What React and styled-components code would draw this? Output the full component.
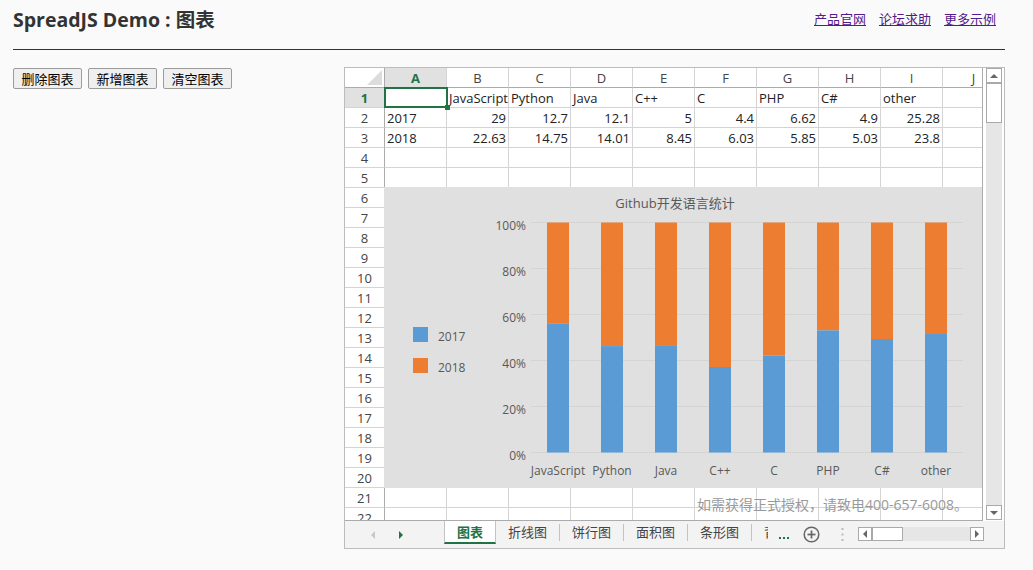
import React from 'react';
import styled, { createGlobalStyle } from 'styled-components';

const FONT = `"Open Sans", "Noto Sans CJK SC", sans-serif`;
const CJK = `"Noto Sans CJK SC", "Open Sans", sans-serif`;
const GREEN = '#217346';

const GlobalStyle = createGlobalStyle`
  html, body { margin: 0; padding: 0; background: #fafafa; }
  body { font-family: ${FONT}; color: #333; }
  * { box-sizing: border-box; }
`;

const Page = styled.div`
  width: 1033px;
  padding-left: 13px;
`;

const Header = styled.header`
  display: flex;
  justify-content: space-between;
  align-items: center;
  width: 992px;
  height: 40px;
`;

const Title = styled.h1`
  margin: 0;
  font-size: 19.5px;
  font-weight: 700;
  line-height: 24px;
  color: #333;
`;

const Links = styled.nav`
  display: flex;
  gap: 13px;
  padding-right: 9px;
  margin-top: -2px;
`;

const Link = styled.a`
  font-family: ${CJK};
  font-size: 13px;
  line-height: 18px;
  color: #551a8b;
  text-decoration: underline;
`;

const Rule = styled.hr`
  margin: 9px 0 0;
  width: 992px;
  height: 0;
  border: 0;
  border-top: 1px solid #333;
`;

const Content = styled.main`
  display: grid;
  grid-template-columns: 331px 661px;
  margin-top: 17px;
`;

const ButtonRow = styled.div`
  display: flex;
  gap: 6px;
  align-self: start;
  margin-top: 1px;
`;

const Button = styled.button`
  width: 69px;
  height: 21px;
  padding: 0;
  font-family: ${CJK};
  font-size: 13px;
  line-height: 19px;
  color: #000;
  background: #efefef;
  border: 1px solid #9c9c9c;
  border-radius: 2px;
`;

const Sheet = styled.section`
  width: 661px;
  height: 482px;
  border: 1px solid #bcbcbc;
  background: #fff;
  display: flex;
  flex-direction: column;
`;

const SheetTop = styled.div`
  display: flex;
  height: 453px;
`;

const Viewport = styled.div`
  position: relative;
  width: 638px;
  height: 453px;
  overflow: hidden;
  border-right: 1px solid #ababab;
  border-bottom: 1px solid #ababab;
`;

const Grid = styled.div`
  display: grid;
  grid-template-columns: 40px repeat(10, 62px);
  grid-auto-rows: 20px;
  width: max-content;
  font-size: 13px;
  line-height: 19px;
`;

const Corner = styled.div`
  position: relative;
  background: #fff;
  border-right: 1px solid #ababab;
  border-bottom: 1px solid #ababab;
  &::after {
    content: '';
    position: absolute;
    right: 2px;
    bottom: 2px;
    border-left: 15px solid transparent;
    border-bottom: 15px solid #dcdcdc;
  }
`;

const ColHead = styled.div`
  padding-top: 1px;
  text-align: center;
  color: ${(p) => (p.$active ? GREEN : '#444')};
  font-weight: ${(p) => (p.$active ? 700 : 400)};
  background: ${(p) => (p.$active ? '#e1e1e1' : '#fff')};
  border-right: 1px solid #d4d4d4;
  border-bottom: 1px solid #ababab;
`;

const RowHead = styled.div`
  padding-top: 1px;
  text-align: center;
  color: ${(p) => (p.$active ? GREEN : '#444')};
  font-weight: ${(p) => (p.$active ? 700 : 400)};
  background: ${(p) => (p.$active ? '#e1e1e1' : '#fff')};
  border-right: 1px solid #ababab;
  border-bottom: 1px solid #d4d4d4;
`;

const Cell = styled.div`
  padding: 1px 2px 0;
  text-align: ${(p) => p.$align || 'left'};
  white-space: nowrap;
  overflow: hidden;
  color: #222;
  border-right: 1px solid #d4d4d4;
  border-bottom: 1px solid #d4d4d4;
`;

const Selection = styled.div`
  position: absolute;
  left: 39px;
  top: 19px;
  width: 64px;
  height: 21px;
  border: 2px solid ${GREEN};
`;

const Handle = styled.div`
  position: absolute;
  left: 100px;
  top: 37px;
  width: 5px;
  height: 5px;
  background: ${GREEN};
`;

const ChartBox = styled.div`
  position: absolute;
  left: 39px;
  top: 119px;
  width: 620px;
  height: 301px;
  background: #e0e0e0;
  font-family: ${FONT};
`;

const Watermark = styled.div`
  position: absolute;
  left: 352px;
  top: 427px;
  font-size: 14px;
  line-height: 20px;
  color: #999;
  white-space: nowrap;
`;

const VScroll = styled.div`
  width: 21px;
  padding: 0 2px 0 3px;
  display: flex;
  flex-direction: column;
  background: #fff;
  height: 452px;
`;

const ScrollBtn = styled.div`
  flex: none;
  height: ${(p) => p.$h || 15}px;
  width: ${(p) => p.$w || 'auto'};
  display: flex;
  align-items: center;
  justify-content: center;
  background: #fff;
  border: 1px solid #a9a9a9;
`;

const Thumb = styled.div`
  flex: none;
  height: ${(p) => p.$size}px;
  background: #fff;
  border: 1px solid #a9a9a9;
`;

const HThumb = styled.div`
  flex: none;
  width: ${(p) => p.$size}px;
  height: 14px;
  background: #fff;
  border: 1px solid #a9a9a9;
`;

const Track = styled.div`
  flex: 1;
  background: #e6e6e6;
`;

const Arrow = styled.span`
  width: 0;
  height: 0;
  ${(p) =>
    p.$dir === 'up'
      ? `border-left: 4px solid transparent; border-right: 4px solid transparent; border-bottom: 4px solid ${p.$color};`
      : p.$dir === 'down'
      ? `border-left: 4px solid transparent; border-right: 4px solid transparent; border-top: 4px solid ${p.$color};`
      : p.$dir === 'left'
      ? `border-top: 4px solid transparent; border-bottom: 4px solid transparent; border-right: 4px solid ${p.$color};`
      : `border-top: 4px solid transparent; border-bottom: 4px solid transparent; border-left: 4px solid ${p.$color};`}
`;

const TabBar = styled.div`
  display: flex;
  align-items: flex-start;
  height: 27px;
  background: #f3f3f3;
`;

const Nav = styled.div`
  display: flex;
  align-items: center;
  gap: 24px;
  width: 99px;
  height: 27px;
  padding-left: 26px;
`;

const Tabs = styled.div`
  display: flex;
  width: 324px;
  overflow: hidden;
  flex: none;
`;

const Tab = styled.div`
  position: relative;
  flex: none;
  height: 23px;
  padding: 0 12px;
  font-family: ${CJK};
  font-size: 13px;
  line-height: 21px;
  white-space: nowrap;
  color: ${(p) => (p.$active ? GREEN : '#444')};
  font-weight: ${(p) => (p.$active ? 700 : 400)};
  background: ${(p) => (p.$active ? '#fff' : 'transparent')};
  border-left: ${(p) => (p.$active ? '1px solid #c3c3c3' : '0')};
  border-right: ${(p) => (p.$active ? '1px solid #c3c3c3' : '1px solid transparent')};
  border-bottom: 2px solid ${(p) => (p.$active ? GREEN : 'transparent')};
  ${(p) =>
    !p.$active &&
    `&::after { content: ''; position: absolute; right: -1px; top: 3px; height: 17px; border-right: 1px solid #c3c3c3; }`}
`;

const More = styled.div`
  display: flex;
  gap: 2px;
  margin: 16px 0 0 11px;
  span {
    width: 2px;
    height: 2px;
    background: ${GREEN};
  }
`;

const IconSlot = styled.div`
  display: flex;
  align-items: center;
  height: 27px;
  margin-left: ${(p) => p.$ml}px;
`;

const HScroll = styled.div`
  display: flex;
  width: 126px;
  height: 14px;
  margin: 6px 0 0 14px;
`;

const cols = ['A', 'B', 'C', 'D', 'E', 'F', 'G', 'H', 'I', 'J'];
const data = [
  ['', 'JavaScript', 'Python', 'Java', 'C++', 'C', 'PHP', 'C#', 'other', ''],
  ['2017', 29, 12.7, 12.1, 5, 4.4, 6.62, 4.9, 25.28, ''],
  ['2018', 22.63, 14.75, 14.01, 8.45, 6.03, 5.85, 5.03, 23.8, ''],
];

const cats = ['JavaScript', 'Python', 'Java', 'C++', 'C', 'PHP', 'C#', 'other'];
const v17 = [29, 12.7, 12.1, 5, 4.4, 6.62, 4.9, 25.28];
const v18 = [22.63, 14.75, 14.01, 8.45, 6.03, 5.85, 5.03, 23.8];

function Chart() {
  const top = 35.5;
  const step = 46;
  const bottom = top + step * 5;
  const H = bottom - top;
  const left = 147;
  const cw = 54;
  const blue = '#5b9bd5';
  const orange = '#ed7d31';
  const grey = '#595959';
  return (
    <svg width="620" height="301" viewBox="0 0 620 301">
      <text x="291" y="20.5" textAnchor="middle" fontSize="13" fill={grey}>
        Github开发语言统计
      </text>
      {[0, 1, 2, 3, 4, 5].map((i) => (
        <g key={i}>
          <line x1={left} x2={left + cw * 8} y1={top + i * step} y2={top + i * step} stroke="#d4d4d4" strokeWidth="1" />
          <text x="142" y={top + i * step + 7} textAnchor="end" fontSize="12" fill={grey}>
            {`${100 - i * 20}%`}
          </text>
        </g>
      ))}
      {cats.map((c, i) => {
        const r = v17[i] / (v17[i] + v18[i]);
        const x = left + cw * i + 16;
        const hb = H * r;
        return (
          <g key={c}>
            <rect x={x} y={top} width="22" height={H - hb} fill={orange} />
            <rect x={x} y={bottom - hb} width="22" height={hb} fill={blue} />
            <text x={left + cw * i + 27} y="287.5" textAnchor="middle" fontSize="12" fill={grey}>
              {c}
            </text>
          </g>
        );
      })}
      <rect x="29" y="140" width="15" height="15" fill={blue} />
      <text x="54" y="153.5" fontSize="12" fill={grey}>2017</text>
      <rect x="29" y="171" width="15" height="15" fill={orange} />
      <text x="54" y="184.5" fontSize="12" fill={grey}>2018</text>
    </svg>
  );
}

function PlusIcon() {
  return (
    <svg width="17" height="17" viewBox="0 0 17 17">
      <circle cx="8.5" cy="8.5" r="7.3" fill="none" stroke="#666" strokeWidth="1.5" />
      <line x1="4.5" x2="12.5" y1="8.5" y2="8.5" stroke="#666" strokeWidth="1.7" />
      <line x1="8.5" x2="8.5" y1="4.5" y2="12.5" stroke="#666" strokeWidth="1.7" />
    </svg>
  );
}

function VDots() {
  return (
    <svg width="3" height="13" viewBox="0 0 3 13">
      <rect x="0.5" y="0" width="2" height="2" fill="#bbb" />
      <rect x="0.5" y="5.5" width="2" height="2" fill="#bbb" />
      <rect x="0.5" y="11" width="2" height="2" fill="#bbb" />
    </svg>
  );
}

export default function App() {
  const rows = [];
  for (let r = 1; r <= 22; r++) rows.push(r);
  return (
    <>
      <GlobalStyle />
      <Page>
        <Header>
          <Title>SpreadJS Demo : 图表</Title>
          <Links>
            <Link href="#">产品官网</Link>
            <Link href="#">论坛求助</Link>
            <Link href="#">更多示例</Link>
          </Links>
        </Header>
        <Rule />
        <Content>
          <ButtonRow>
            <Button>删除图表</Button>
            <Button>新增图表</Button>
            <Button>清空图表</Button>
          </ButtonRow>
          <Sheet>
            <SheetTop>
              <Viewport>
                <Grid>
                  <Corner />
                  {cols.map((c, i) => (
                    <ColHead key={c} $active={i === 0}>{c}</ColHead>
                  ))}
                  {rows.map((r) => (
                    <React.Fragment key={r}>
                      <RowHead $active={r === 1}>{r}</RowHead>
                      {cols.map((c, ci) => {
                        const v = data[r - 1] ? data[r - 1][ci] : '';
                        return (
                          <Cell key={c} $align={typeof v === 'number' ? 'right' : 'left'}>
                            {v}
                          </Cell>
                        );
                      })}
                    </React.Fragment>
                  ))}
                </Grid>
                <Selection />
                <Handle />
                <ChartBox>
                  <Chart />
                </ChartBox>
                <Watermark>如需获得正式授权，请致电400-657-6008。</Watermark>
              </Viewport>
              <VScroll>
                <ScrollBtn>
                  <Arrow $dir="up" $color="#666" />
                </ScrollBtn>
                <Thumb $size={40} />
                <Track />
                <ScrollBtn>
                  <Arrow $dir="down" $color="#666" />
                </ScrollBtn>
              </VScroll>
            </SheetTop>
            <TabBar>
              <Nav>
                <Arrow $dir="left" $color="#c8c8c8" />
                <Arrow $dir="right" $color={GREEN} />
              </Nav>
              <Tabs>
                <Tab $active>图表</Tab>
                <Tab>折线图</Tab>
                <Tab>饼行图</Tab>
                <Tab>面积图</Tab>
                <Tab>条形图</Tab>
                <Tab>背景图</Tab>
              </Tabs>
              <More>
                <span />
                <span />
                <span />
              </More>
              <IconSlot $ml={14}>
                <PlusIcon />
              </IconSlot>
              <IconSlot $ml={21}>
                <VDots />
              </IconSlot>
              <HScroll>
                <ScrollBtn $h={14} $w="14px">
                  <Arrow $dir="left" $color="#666" />
                </ScrollBtn>
                <HThumb $size={31} />
                <Track />
                <ScrollBtn $h={14} $w="14px">
                  <Arrow $dir="right" $color="#666" />
                </ScrollBtn>
              </HScroll>
            </TabBar>
          </Sheet>
        </Content>
      </Page>
    </>
  );
}
